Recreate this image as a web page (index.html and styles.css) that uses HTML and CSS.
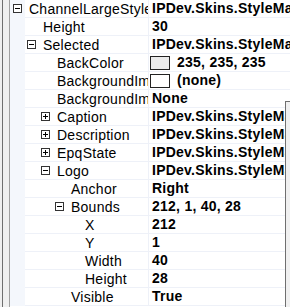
FILE: index.html
```html
<!DOCTYPE html>
<html>
<head>
<link rel="stylesheet" href="styles.css">
</head>
<body>
<div class="shell">
  <div class="rail"></div>
  <div class="grid">
    <div class="row"><span class="label l0"><i class="box minus"></i>ChannelLargeStyle</span><span class="value">IPDev.Skins.StyleMap</span></div>
    <div class="row"><span class="label l1"><i class="sp"></i>Height</span><span class="value">30</span></div>
    <div class="row"><span class="label l1"><i class="box minus"></i>Selected</span><span class="value">IPDev.Skins.StyleMap</span></div>
    <div class="row"><span class="label l2"><i class="sp"></i>BackColor</span><span class="value"><i class="swatch grey"></i>235, 235, 235</span></div>
    <div class="row"><span class="label l2"><i class="sp"></i>BackgroundImage</span><span class="value"><i class="swatch"></i>(none)</span></div>
    <div class="row"><span class="label l2"><i class="sp"></i>BackgroundImageLayout</span><span class="value">None</span></div>
    <div class="row"><span class="label l2"><i class="box plus"></i>Caption</span><span class="value">IPDev.Skins.StyleMap</span></div>
    <div class="row"><span class="label l2"><i class="box plus"></i>Description</span><span class="value">IPDev.Skins.StyleMap</span></div>
    <div class="row"><span class="label l2"><i class="box plus"></i>EpqState</span><span class="value">IPDev.Skins.StyleMap</span></div>
    <div class="row"><span class="label l2"><i class="box minus"></i>Logo</span><span class="value">IPDev.Skins.StyleMap</span></div>
    <div class="row"><span class="label l3"><i class="sp"></i>Anchor</span><span class="value">Right</span></div>
    <div class="row"><span class="label l3"><i class="box minus"></i>Bounds</span><span class="value">212, 1, 40, 28</span></div>
    <div class="row"><span class="label l4"><i class="sp"></i>X</span><span class="value">212</span></div>
    <div class="row"><span class="label l4"><i class="sp"></i>Y</span><span class="value">1</span></div>
    <div class="row"><span class="label l4"><i class="sp"></i>Width</span><span class="value">40</span></div>
    <div class="row"><span class="label l4"><i class="sp"></i>Height</span><span class="value">28</span></div>
    <div class="row"><span class="label l3"><i class="sp"></i>Visible</span><span class="value">True</span></div>
    <div class="scroll"></div>
  </div>
</div>
</body>
</html>
```

FILE: styles.css
```css
body {
	margin: 0;
	background: #f0f0f0;
	font-family: "Liberation Sans", Arial, sans-serif;
	font-size: 14px;
	letter-spacing: 0.25px;
	color: #000;
}
.shell {
	display: flex;
	height: 307px;
	overflow: hidden;
}
.rail {
	margin-left: 2px;
	width: 8px;
	box-sizing: border-box;
	border-left: 1px solid #6f6f6f;
	border-right: 1px solid #a0a0a0;
}
.grid {
	position: relative;
	width: 280px;
	background: #fff;
	overflow: hidden;
}
.row {
	display: flex;
	height: 18px;
	line-height: 17px;
	white-space: nowrap;
}
.label {
	display: flex;
	align-items: center;
	width: 139px;
	flex: none;
	box-sizing: border-box;
	overflow: hidden;
	border-right: 1px solid #eef1f8;
	background:
		linear-gradient(#eef1f8, #eef1f8) 15px 100% / 100% 1px no-repeat,
		linear-gradient(to right, #f4f7fc 15px, #fff 15px);
}
.l0 { padding-left: 3px; }
.l1 { padding-left: 17px; }
.l2 { padding-left: 31px; }
.l3 { padding-left: 45px; }
.l4 { padding-left: 59px; }
.box, .sp {
	flex: none;
	width: 9px;
	height: 9px;
	margin-right: 7px;
	margin-bottom: 1px;
}
.box {
	position: relative;
	box-sizing: border-box;
	border: 1px solid #333;
	background: #fff;
}
.box:before {
	content: "";
	position: absolute;
	left: 1px;
	top: 3px;
	width: 5px;
	height: 1px;
	background: #000;
}
.plus:after {
	content: "";
	position: absolute;
	left: 3px;
	top: 1px;
	width: 1px;
	height: 5px;
	background: #000;
}
.value {
	display: flex;
	align-items: center;
	flex: 1;
	padding-left: 3px;
	border-bottom: 1px solid #eef1f8;
	font-weight: bold;
	overflow: hidden;
}
.swatch {
	flex: none;
	width: 20px;
	height: 14px;
	margin-left: -2px;
	margin-right: 7px;
	box-sizing: border-box;
	border: 1px solid #222;
	background: #fff;
}
.swatch.grey { background: #ebebeb; }
.scroll {
	position: absolute;
	left: 275px;
	top: 101px;
	right: 0;
	bottom: 0;
	border-left: 1px solid #6f6f6f;
	border-top: 1px solid #6f6f6f;
	background: #f0f0f0;
}
```
